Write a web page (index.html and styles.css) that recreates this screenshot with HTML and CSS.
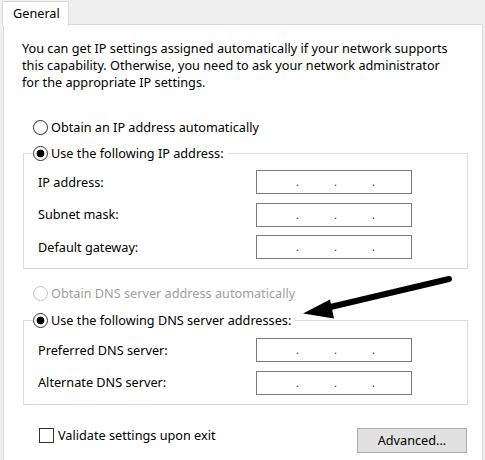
FILE: index.html
```html
<!DOCTYPE html>
<html>
<head>
<meta charset="utf-8">
<link rel="stylesheet" href="styles.css">
</head>
<body>
<div class="window">
  <div class="tabstrip"><div class="tab">General</div></div>
  <div class="panel">
    <p class="intro">You can get IP settings assigned automatically if your network supports<br>this capability. Otherwise, you need to ask your network administrator<br>for the appropriate IP settings.</p>

    <div class="option first"><span class="radio"></span>Obtain an IP address automatically</div>
    <fieldset class="group group-ip">
      <legend><span class="radio checked"></span>Use the following IP address:</legend>
      <div class="field"><span class="label">IP address:</span><div class="ipbox"><span class="seg"></span><span class="dot">.</span><span class="seg"></span><span class="dot">.</span><span class="seg"></span><span class="dot">.</span><span class="seg"></span></div></div>
      <div class="field"><span class="label">Subnet mask:</span><div class="ipbox"><span class="seg"></span><span class="dot">.</span><span class="seg"></span><span class="dot">.</span><span class="seg"></span><span class="dot">.</span><span class="seg"></span></div></div>
      <div class="field"><span class="label">Default gateway:</span><div class="ipbox"><span class="seg"></span><span class="dot">.</span><span class="seg"></span><span class="dot">.</span><span class="seg"></span><span class="dot">.</span><span class="seg"></span></div></div>
    </fieldset>

    <div class="option second disabled"><span class="radio"></span>Obtain DNS server address automatically</div>
    <fieldset class="group group-dns">
      <legend><span class="radio checked"></span>Use the following DNS server addresses:</legend>
      <div class="field"><span class="label">Preferred DNS server:</span><div class="ipbox"><span class="seg"></span><span class="dot">.</span><span class="seg"></span><span class="dot">.</span><span class="seg"></span><span class="dot">.</span><span class="seg"></span></div></div>
      <div class="field"><span class="label">Alternate DNS server:</span><div class="ipbox"><span class="seg"></span><span class="dot">.</span><span class="seg"></span><span class="dot">.</span><span class="seg"></span><span class="dot">.</span><span class="seg"></span></div></div>
    </fieldset>

    <div class="bottom">
      <div class="check-row"><span class="checkbox"></span>Validate settings upon exit</div>
      <div class="button">Advanced...</div>
    </div>
  </div>

  <svg class="arrow" width="485" height="460" viewBox="0 0 485 460">
    <line x1="449" y1="279" x2="322" y2="309" stroke="#000" stroke-width="6" stroke-linecap="round"/>
    <polygon points="303,313.5 330,299.5 334,318.5" fill="#000"/>
  </svg>
</div>
</body>
</html>
```

FILE: styles.css
```css
* { box-sizing: border-box; }

html, body {
  margin: 0;
  padding: 0;
  background: #f0f0f0;
}

body {
  font-family: "Noto Sans", "Open Sans", sans-serif;
  font-size: 12.7px;
  line-height: 17px;
  color: #000;
  width: 485px;
  height: 460px;
  overflow: hidden;
}

.window {
  position: relative;
  width: 485px;
  height: 460px;
}

.tabstrip {
  height: 25px;
  padding-top: 1px;
  padding-left: 2px;
}

.tab {
  position: relative;
  z-index: 1;
  width: 67px;
  height: 25px;
  background: #fff;
  border: 1px solid #d9d9d9;
  border-bottom: none;
  padding-left: 10px;
  padding-top: 3px;
}

.panel {
  margin-top: -1px;
  margin-left: 3px;
  width: 480px;
  height: 440px;
  background: #fff;
  border: 1px solid #d9d9d9;
}

.intro {
  margin: 15px 0 0 18px;
  white-space: nowrap;
}

.option {
  display: flex;
  align-items: center;
  height: 17px;
  margin-left: 29px;
  white-space: nowrap;
}

.option.first { margin-top: 27.5px; }
.option.second { margin-top: 15.5px; }

.disabled { color: #a0a0a0; }

.radio {
  display: inline-block;
  width: 15px;
  height: 15px;
  border: 1px solid #333;
  border-radius: 50%;
  margin-right: 3px;
  flex: none;
  background: #fff;
}

.radio.checked {
  background: radial-gradient(circle, #000 0, #000 3.6px, #fff 4.2px);
}

.disabled .radio { border-color: #c2c2c2; }

.group {
  margin: 0 0 0 19px;
  width: 445px;
  border: 1px solid #dcdcdc;
  padding: 8.5px 0 9px 14px;
  min-width: 0;
}

.group-ip { margin-top: 9px; }
.group-dns { margin-top: 10px; padding-top: 9.5px; padding-bottom: 9.5px; }

.group legend {
  display: flex;
  align-items: center;
  height: 17px;
  padding: 0 4px 0 0;
  margin-left: -5px;
  white-space: nowrap;
}

.field {
  display: flex;
  align-items: center;
  height: 24px;
}

.field + .field { margin-top: 8.5px; }

.label {
  width: 218px;
  white-space: nowrap;
}

.ipbox {
  display: flex;
  width: 156px;
  height: 24px;
  border: 1px solid #7a7a7a;
  padding-left: 3px;
  line-height: 22px;
  color: #333;
}

.seg { width: 36px; }
.dot { width: 2px; text-align: center; font-size: 11px; }

.bottom {
  display: flex;
  justify-content: space-between;
  align-items: flex-start;
  margin: 23px 0 0 35px;
  width: 428px;
}

.check-row {
  display: flex;
  align-items: center;
  height: 15px;
  white-space: nowrap;
}

.checkbox {
  display: inline-block;
  width: 15px;
  height: 15px;
  border: 1px solid #333;
  background: #fff;
  margin-right: 4px;
}

.button {
  width: 110px;
  height: 25px;
  background: #e1e1e1;
  border: 1px solid #adadad;
  text-align: center;
  line-height: 23px;
}

.arrow {
  position: absolute;
  top: 0;
  left: 0;
  pointer-events: none;
}
```
